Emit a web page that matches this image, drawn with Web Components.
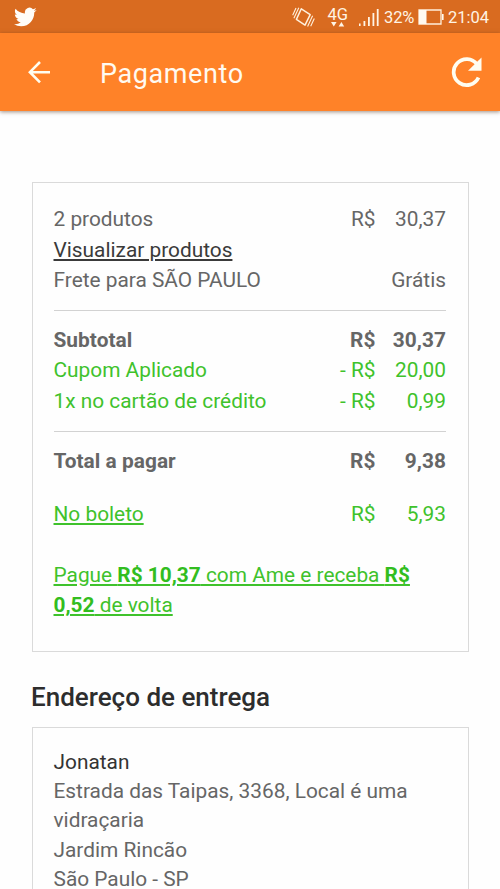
<!DOCTYPE html>
<html lang="pt-BR">
<head>
<meta charset="utf-8">
<title>Pagamento</title>
<style>
html,body{margin:0;height:889px;overflow:hidden;background:#fefefe}
body{font-family:Roboto,"Liberation Sans",sans-serif;font-size:20.85px;color:#666}
</style>
</head>
<body>
<pay-screen></pay-screen>
<script>
function define(name, html){
  const t=document.createElement('template');
  t.innerHTML=html;
  customElements.define(name, class extends HTMLElement{
    constructor(){super();this.attachShadow({mode:'open'}).append(t.content.cloneNode(true));}
  });
}

define('status-bar',`<style>
:host{display:flex;align-items:center;height:33px;box-sizing:border-box;padding:0 10px 0 14px;background:#d96b20;color:#fff4e4;font-size:16.5px;line-height:33px}
svg{display:block;flex:none}
.bird{margin-right:auto}
.vib{margin-right:12px}
.net{display:flex;flex-direction:column;align-items:center;margin:1px 11px 0 0;line-height:15px}
.sig{margin-right:5px}
.pct{width:31px;white-space:nowrap;letter-spacing:-.1px;margin-right:3px;padding-top:1px}
.bat{margin-right:4px}
.time{width:42px;white-space:nowrap;padding-top:1px}
</style>
<svg class="bird" width="23" height="20" viewBox="0 0 24 20"><path fill="#fffdf8" d="M23.6 2.6c-.9.4-1.8.6-2.8.8 1-.6 1.800-1.500 2.100-2.700-.9.6-2 1-3.100 1.200A4.850 4.850 0 0 0 11.500 6.300C7.500 6.100 3.900 4.200 1.600 1.300.3 3.500 1 6.400 3.100 7.800c-.8 0-1.500-.2-2.200-.6 0 2.200 1.500 4.400 3.900 4.900-.7.200-1.500.2-2.200.1.600 1.900 2.400 3.300 4.500 3.400A9.800 9.800 0 0 1 0 17.500 13.800 13.800 0 0 0 7.400 19.700c9 0 14-7.600 13.700-14.500 1-.7 1.800-1.600 2.500-2.600z"/></svg>
<svg class="vib" width="23" height="22" viewBox="0 0 23 22" fill="none" stroke="#fff0dc" stroke-linejoin="round"><path stroke-width="1.500" d="M9.300 2.800L18.200 8.700 13 19.200 4.400 13.400z"/><path stroke-width="1.100" d="M6.800 1.800L1.900 12.200M4 2L.7 9.300M20.600 9.800L15.600 20.400M22.300 12.500L18.700 20.200"/></svg>
<span class="net"><span>4G</span><svg width="14" height="5" viewBox="0 0 14 5" fill="#fff4e4"><path d="M0 0h5.600L2.800 4.600zM7.600 4.600h5.600L10.400 0z"/></svg></span>
<svg class="sig" width="20" height="18" viewBox="0 0 20 18" fill="#fff4e4"><path d="M0 15.500h1.600V18H0zM4.500 13h1.800v5H4.500zM9 9h1.800v9H9zM13.500 5h1.800v13h-1.800zM17.800 1h1.800v17h-1.800z"/></svg>
<span class="pct">32%</span>
<svg class="bat" width="26" height="16" viewBox="0 0 26 16"><path fill="none" stroke="#fff0dc" stroke-width="1.300" d="M1 1h22v14H1z"/><path fill="#fffaf0" d="M1 1h7.500v14H1zM24 5h1.600v6H24z"/></svg>
<span class="time">21:04</span>`);

define('app-bar',`<style>
:host{display:flex;align-items:center;position:relative;height:78px;box-sizing:border-box;padding:0 17px 0 28px;background:#ff8228;box-shadow:0 1px 4px rgba(80,50,30,.55);color:#fffaf0}
.title{flex:1;margin-left:49px;font-size:27px;line-height:36px;letter-spacing:.6px;padding-top:3px}
svg{display:block;flex:none}
</style>
<svg width="23" height="23" viewBox="0 0 23 23" fill="none" stroke="#fffdf0" stroke-width="2.600"><path d="M12 1L1.900 11.200 12 21.400M2.200 11.200H22"/></svg>
<span class="title"><slot></slot></span>
<svg width="32" height="32" viewBox="0 0 32 32"><path fill="none" stroke="#fffdf0" stroke-width="3.700" d="M26 8.200A13 13 0 1 0 27.500 21.500"/><path fill="#fffdf0" d="M30.500 1.500v13.300H17z"/></svg>`);

define('info-card',`<style>
:host{display:block;box-sizing:border-box;margin:0 31px 0 31.500px;border:1.500px solid #dadada;padding:21px 22px 22px 21px}
</style><slot></slot>`);

define('card-group',`<style>
:host{display:block}
:host([rule]){border-bottom:1px solid #d2d2d2;padding-bottom:14px;margin-bottom:14px}
</style><slot></slot>`);

define('price-row',`<style>
:host{display:flex;line-height:30.600px;white-space:nowrap}
:host([bold]){font-weight:700;letter-spacing:.04px}
:host([green]){color:#3fc22c}
.label{flex:1}
.amount{min-width:70.500px;text-align:right}
</style><span class="label"><slot></slot></span><span><slot name="cur"></slot></span><span class="amount"><slot name="val"></slot></span>`);

define('text-link',`<style>
:host{text-decoration:underline;text-decoration-thickness:1.500px;text-underline-offset:2px;color:var(--link,#3a3a3a)}
</style><slot></slot>`);

define('ame-offer',`<style>
:host{display:block;margin-top:30.500px;line-height:30.600px;--link:#3fc22c}
b{color:#32bd20}
</style><text-link>Pague <b>R$ 10,37</b> com Ame e receba <b>R$<br>0,52</b> de volta</text-link>`);

define('section-title',`<style>
:host{display:block;margin:27px 31px 12px;font-size:26px;font-weight:500;line-height:36px;color:#2d2d2d}
</style><slot></slot>`);

define('address-lines',`<style>
:host{display:block;line-height:29.200px;height:180px;margin-top:-1px}
::slotted(*){display:block}
::slotted([slot=name]){color:#333}
</style><slot name="name"></slot><slot></slot>`);

define('pay-screen',`<style>
:host{display:flex;flex-direction:column;height:889px;overflow:hidden}
status-bar,app-bar{flex:none}
main{padding-top:71px}
.slip{margin-top:22.500px;--link:#3fc22c}
.summary{height:470px}
</style>
<status-bar></status-bar>
<app-bar>Pagamento</app-bar>
<main>
<info-card class="summary">
<card-group rule>
<price-row>2 produtos<span slot="cur">R$</span><span slot="val">30,37</span></price-row>
<price-row><text-link>Visualizar produtos</text-link></price-row>
<price-row>Frete para SÃO PAULO<span slot="val">Grátis</span></price-row>
</card-group>
<card-group rule>
<price-row bold>Subtotal<span slot="cur">R$</span><span slot="val">30,37</span></price-row>
<price-row green>Cupom Aplicado<span slot="cur">- R$</span><span slot="val">20,00</span></price-row>
<price-row green>1x no cartão de crédito<span slot="cur">- R$</span><span slot="val">0,99</span></price-row>
</card-group>
<card-group>
<price-row bold>Total a pagar<span slot="cur">R$</span><span slot="val">9,38</span></price-row>
<price-row green class="slip"><text-link>No boleto</text-link><span slot="cur">R$</span><span slot="val">5,93</span></price-row>
<ame-offer></ame-offer>
</card-group>
</info-card>
<section-title>Endereço de entrega</section-title>
<info-card>
<address-lines><span slot="name">Jonatan</span><span>Estrada das Taipas, 3368, Local é uma vidraçaria</span><span>Jardim Rincão</span><span>São Paulo - SP</span></address-lines>
</info-card>
</main>`);
</script>
</body>
</html>
